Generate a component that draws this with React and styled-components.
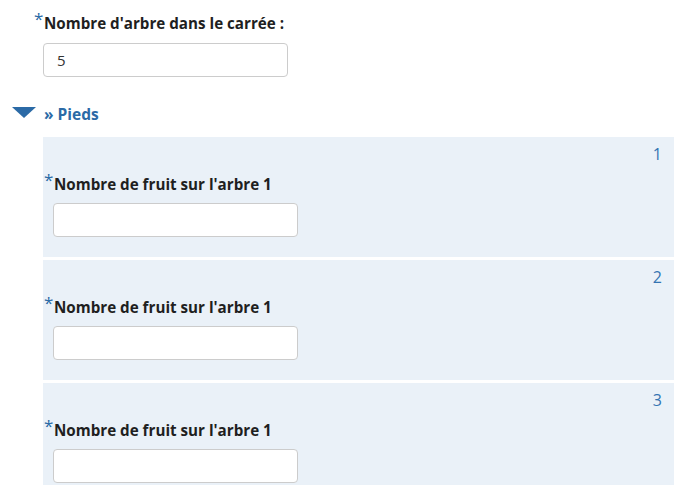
import React from 'react'
import styled, { createGlobalStyle } from 'styled-components'

const GlobalStyle = createGlobalStyle`
  html, body {
    margin: 0;
    padding: 0;
    background: #ffffff;
    font-family: "Open Sans", "Liberation Sans", sans-serif;
  }
`

const colors = {
  text: '#1f1f1f',
  blue: '#2b6aa6',
  index: '#3474b2',
  panel: '#eaf1f8',
  border: '#cccccc'
}

const Page = styled.div`
  width: 690px;
  height: 485px;
  overflow: hidden;
  padding: 11px 16px 0 34px;
  box-sizing: border-box;
`

const Field = styled.div`
  display: flex;
  flex-direction: column;
`

const Label = styled.label`
  display: flex;
  align-items: flex-start;
  font-size: 15.2px;
  font-weight: 700;
  color: ${colors.text};
  line-height: 24px;
`

const Star = styled.span`
  color: ${colors.blue};
  font-size: 17px;
  font-weight: 400;
  line-height: 17px;
  width: 10px;
  margin-top: -1px;
`

const TextInput = styled.input`
  box-sizing: border-box;
  width: 245px;
  height: 34px;
  margin: ${({ gap }) => gap || '8px'} 0 0 9px;
  padding: 0 13px;
  border: 1px solid ${colors.border};
  border-radius: 4px;
  background: #fff;
  font-family: inherit;
  font-size: 15px;
  color: #333;
  outline: none;
`

const Section = styled.div`
  margin: 25px 0 0 -22px;
`

const SectionHead = styled.div`
  display: flex;
  align-items: center;
  gap: 8px;
  height: 24px;
`

const Toggle = styled.svg`
  width: 24px;
  height: 12px;
  flex: none;
  margin-top: -2px;
`

const SectionTitle = styled.span`
  color: ${colors.blue};
  font-size: 15.5px;
  font-weight: 700;
`

const Panels = styled.div`
  display: flex;
  flex-direction: column;
  gap: 3px;
  margin: 11px 0 0 31px;
`

const Panel = styled.div`
  position: relative;
  height: 120px;
  box-sizing: border-box;
  background: ${colors.panel};
  padding: 35px 0 0 1px;
`

const Index = styled.span`
  position: absolute;
  top: 6px;
  right: 12px;
  color: ${colors.index};
  font-size: 16px;
`

const Required = ({ children }) => (
  <Label>
    <Star>*</Star>
    {children}
  </Label>
)

const App = () => {
  const rows = [1, 2, 3]
  return (
    <Page>
      <GlobalStyle />
      <Field>
        <Required>Nombre d'arbre dans le carrée :</Required>
        <TextInput defaultValue="5" />
      </Field>
      <Section>
        <SectionHead>
          <Toggle viewBox="0 0 24 12">
            <polygon points="0,0 24,0 12,11" fill={colors.blue} />
          </Toggle>
          <SectionTitle>» Pieds</SectionTitle>
        </SectionHead>
        <Panels>
          {rows.map(n => (
            <Panel key={n}>
              <Index>{n}</Index>
              <Field>
                <Required>Nombre de fruit sur l'arbre 1</Required>
                <TextInput gap="7px" />
              </Field>
            </Panel>
          ))}
        </Panels>
      </Section>
    </Page>
  )
}

export default App
